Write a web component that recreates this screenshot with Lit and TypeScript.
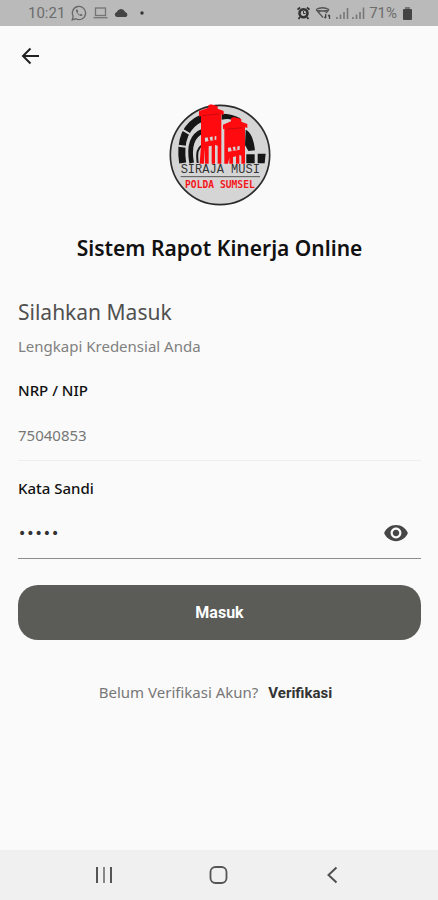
import { LitElement, html, css } from "lit";
import { customElement, state } from "lit/decorators.js";

@customElement("status-bar")
class StatusBar extends LitElement {
  static styles = css`
    :host {
      display: flex;
      align-items: center;
      justify-content: space-between;
      height: 26px;
      padding: 0 24px 0 28px;
      background: #bababa;
      color: #6c6c6c;
      font: 15px/26px Roboto, sans-serif;
    }
    .group {
      display: flex;
      align-items: center;
    }
    .left {
      gap: 6px;
    }
    .right {
      gap: 4px;
    }
    svg {
      display: block;
    }
  `;
  render() {
    return html`
      <div class="group left">
        <span>10:21</span>
        <svg width="16" height="16" viewBox="0 0 16 16" fill="none" stroke="#686868" stroke-width="1.3">
          <path d="M1.2 14.8l1-3.6A6.6 6.6 0 1 1 4.8 13.8z" />
          <path d="M5.2 4.6c-.8 1 .1 3 1.7 4.6s3.6 2.3 4.4 1.4l.4-.8-1.9-1-.9.9C7.9 9.3 7 8.4 6.5 7.3l.8-.9-.8-1.9z" fill="#686868" stroke="none" />
        </svg>
        <svg width="15" height="14" viewBox="0 0 15 14" fill="none" stroke="#747474" stroke-width="1.3">
          <rect x="2.5" y="2" width="10" height="7.5" />
          <path d="M.5 11.7h14" />
        </svg>
        <svg width="15" height="14" viewBox="0 0 15 14">
          <path d="M3 11a2.600 2.600 0 0 1-.2-5.100A4.400 4.400 0 0 1 10.500 5l1 1.200A2.600 2.600 0 0 1 12 11z" fill="#444" />
        </svg>
        <svg width="14" height="14" viewBox="0 0 14 14">
          <circle cx="7" cy="7" r="1.700" fill="#333" />
        </svg>
      </div>
      <div class="group right">
        <svg width="15" height="14" viewBox="0 0 15 14" fill="none" stroke="#333">
          <circle cx="7.5" cy="7.3" r="4" stroke-width="2.6" />
          <path d="M1.500 3.600l2.600-2.100M13.500 3.600l-2.600-2.100M4 11l-1.500 2M11 11l1.500 2" stroke-width="1.800" />
          <path d="M7.500 5v2.500h2" stroke-width="1" />
        </svg>
        <svg width="17" height="14" viewBox="0 0 17 14" fill="none" stroke="#555" stroke-width="1.300">
          <path d="M1 3.500a11 8 0 0 1 13 0M3.500 6.200a6 5 0 0 1 7.500-.2M1 3.500l7 8M14 3.500l-3 3.500M1 3.500q6.500 3 13 0" />
          <path d="M10.700 8v4m-1.300-1.300l1.300 1.500M14.500 13V9m-1.300 1.300l1.300-1.500" stroke="#444" />
        </svg>
        <svg width="29" height="14" viewBox="0 0 29 14" stroke="#777" stroke-width="1.600">
          <path d="M1 11v2M4.500 8.500V13M8 6v7M11.500 2v11M17 11v2M20.500 8.500V13M24 6v7M27.500 1.500V13" />
        </svg>
        <span>71%</span>
        <svg width="13" height="14" viewBox="0 0 13 14" fill="#444">
          <rect x="4" y="1" width="5" height="3" fill="#777" />
          <rect x="2" y="3" width="9" height="11" rx="1" />
        </svg>
      </div>
    `;
  }
}

@customElement("siraja-logo")
class SirajaLogo extends LitElement {
  static styles = css`
    :host,
    svg {
      display: block;
    }
    .name {
      font: 36px "Liberation Mono", monospace;
      fill: #333;
    }
    .unit {
      font: bold 29px "DejaVu Sans Mono", monospace;
      fill: #f5161b;
    }
  `;
  render() {
    return html`
      <svg width="102" height="102" viewBox="24 27 306 306" role="img" aria-label="Siraja Musi Polda Sumsel">
        <circle cx="177" cy="180" r="149" fill="#d5d5d6" stroke="#2a2a2a" stroke-width="5" />
        <g fill="none" stroke="#161616">
          <path d="M65 204C54 130 78 88 124 68" stroke-width="21" />
          <path d="M92 204C82 150 96 120 126 108" stroke-width="14" />
          <path d="M110 204C106 170 110 160 124 150" stroke-width="6" />
        </g>
        <path d="M182 56Q216 56 238 70L234 80Q208 68 182 74zM254 104Q276 114 282 166L262 168L252 150zM256 178h25v27h-25zM290 176h24l-3 29h-21z" fill="#161616" />
        <path d="M52 152l28 4M64 104l24 14" stroke="#d5d5d6" stroke-width="6" />
        <path d="M122 100h60v106h-60zM188 100h62v106h-62z" fill="#d5d5d6" />
        <g fill="#ff0a0f">
          <path d="M114 48L142 38V31L150 28L170 34V41L188 48V60L181 58V206H170V152L162 150V206H152V152L143 154V206H132V158L129 206H116L120 150V63L114 65z" />
          <path d="M186 89L210 79V70L218 66L241 72V80L259 87V99L252 97V206H241V182L235 180V206H225V184L216 186V206H205V188L201 206H190V101L186 103z" />
        </g>
        <path d="M132 128l34-5v11l-34 6zM201 158l35-5v11l-35 6z" fill="#d5d5d6" />
        <path d="M142 122l4 18M158 119v17M211 152l4 15M226 150v14" stroke="#ff0a0f" stroke-width="6" />
        <path d="M124 62l50-5M195 103l50-5" stroke="#c90a10" stroke-width="3" />
        <text class="name" x="59" y="235">SIRAJA MUSI</text>
        <path d="M59 245h238" stroke="#555" stroke-width="3" />
        <text class="unit" x="72" y="279">POLDA SUMSEL</text>
      </svg>
    `;
  }
}

@customElement("app-root")
class AppRoot extends LitElement {
  @state() private revealed = false;

  static styles = css`
    :host {
      display: flex;
      flex-direction: column;
      min-height: 100vh;
      background: #fafafa;
      color: #111;
      font-family: "Noto Sans", sans-serif;
    }
    button {
      border: 0;
      padding: 0;
      background: none;
      cursor: pointer;
    }
    svg {
      display: block;
    }
    .appbar {
      display: flex;
      align-items: center;
      height: 60px;
      padding: 0 18px;
    }
    .content {
      flex: 1;
      display: flex;
      flex-direction: column;
      padding: 18px 17px 18px 18px;
    }
    .logo {
      align-self: center;
    }
    h1 {
      margin: 28px 0 0;
      font-size: 21px;
      line-height: 28px;
      font-weight: 600;
      text-align: center;
    }
    h2 {
      margin: 34px 0 0;
      font-size: 21px;
      line-height: 32px;
      font-weight: 400;
      color: #505050;
    }
    .hint {
      margin: 6px 0 20px;
      font-size: 15px;
      line-height: 24px;
      color: #808080;
    }
    form {
      display: flex;
      flex-direction: column;
    }
    label {
      font-size: 15px;
      line-height: 24px;
      font-weight: 500;
    }
    .field {
      display: flex;
      align-items: center;
      height: 50px;
      margin: 8px 0 15px;
      padding-right: 12px;
      border-bottom: 1px solid #eee;
    }
    .secret {
      border-bottom-color: #8c8c8c;
      margin-bottom: 26px;
    }
    input {
      flex: 1;
      min-width: 0;
      border: 0;
      padding: 0;
      outline: 0;
      background: none;
      color: #777;
      font: 15px/24px "Noto Sans", sans-serif;
    }
    .secret input {
      color: #333;
    }
    .secret input[type="password"] {
      font-family: "DejaVu Sans", sans-serif;
      font-size: 14px;
    }
    .submit {
      height: 55px;
      border-radius: 20px;
      background: #5b5b58;
      color: #fff;
      font: bold 16px/24px Roboto, sans-serif;
    }
    .verify {
      display: flex;
      justify-content: center;
      align-items: baseline;
      gap: 10px;
      margin: 40px 0 0;
      padding-right: 8px;
      font-size: 15px;
      line-height: 24px;
      color: #777;
    }
    a {
      color: #333;
      font: bold 15px/24px Roboto, sans-serif;
      text-decoration: none;
    }
    .navbar {
      display: flex;
      justify-content: space-around;
      align-items: center;
      height: 50px;
      padding: 0 47px;
      background: #f0f0f0;
    }
  `;

  render() {
    return html`
      <status-bar></status-bar>
      <header class="appbar">
        <button aria-label="Kembali">
          <svg width="24" height="24" viewBox="0 0 24 24" fill="none" stroke="#222" stroke-width="2">
            <path d="M21 12H5.500M12.500 4.500L5 12l7.500 7.500" />
          </svg>
        </button>
      </header>
      <main class="content">
        <siraja-logo class="logo"></siraja-logo>
        <h1>Sistem Rapot Kinerja Online</h1>
        <h2>Silahkan Masuk</h2>
        <p class="hint">Lengkapi Kredensial Anda</p>
        <form @submit=${(e: Event) => e.preventDefault()}>
          <label for="nrp">NRP / NIP</label>
          <div class="field"><input id="nrp" type="text" value="75040853" /></div>
          <label for="password">Kata Sandi</label>
          <div class="field secret">
            <input id="password" type=${this.revealed ? "text" : "password"} value="12345" />
            <button type="button" aria-label="Tampilkan kata sandi" @click=${() => (this.revealed = !this.revealed)}>
              <svg width="26" height="26" viewBox="0 0 24 24" fill="#464646">
                <path d="M12 4.5C7 4.5 2.730 7.610 1 12c1.730 4.390 6 7.500 11 7.500s9.270-3.110 11-7.500c-1.730-4.390-6-7.500-11-7.500zM12 17c-2.760 0-5-2.240-5-5s2.240-5 5-5 5 2.240 5 5-2.240 5-5 5zm0-8c-1.660 0-3 1.340-3 3s1.340 3 3 3 3-1.340 3-3-1.340-3-3-3z" />
              </svg>
            </button>
          </div>
          <button class="submit" type="submit">Masuk</button>
        </form>
        <p class="verify">Belum Verifikasi Akun? <a href="#verifikasi">Verifikasi</a></p>
      </main>
      <nav class="navbar">
        <button aria-label="Aplikasi terbaru">
          <svg width="20" height="20" viewBox="0 0 20 20" stroke="#555" stroke-width="2">
            <path d="M3 2v16M17 2v16" />
            <path d="M10 2v16" stroke="#888" />
          </svg>
        </button>
        <button aria-label="Beranda">
          <svg width="20" height="20" viewBox="0 0 20 20" fill="none" stroke="#555" stroke-width="1.800">
            <rect x="1.500" y="2" width="16" height="16" rx="5" />
          </svg>
        </button>
        <button aria-label="Kembali ke layar sebelumnya">
          <svg width="20" height="20" viewBox="0 0 20 20" fill="none" stroke="#505050" stroke-width="2">
            <path d="M12.500 2.500L4.500 10l8 7.500" />
          </svg>
        </button>
      </nav>
    `;
  }
}
